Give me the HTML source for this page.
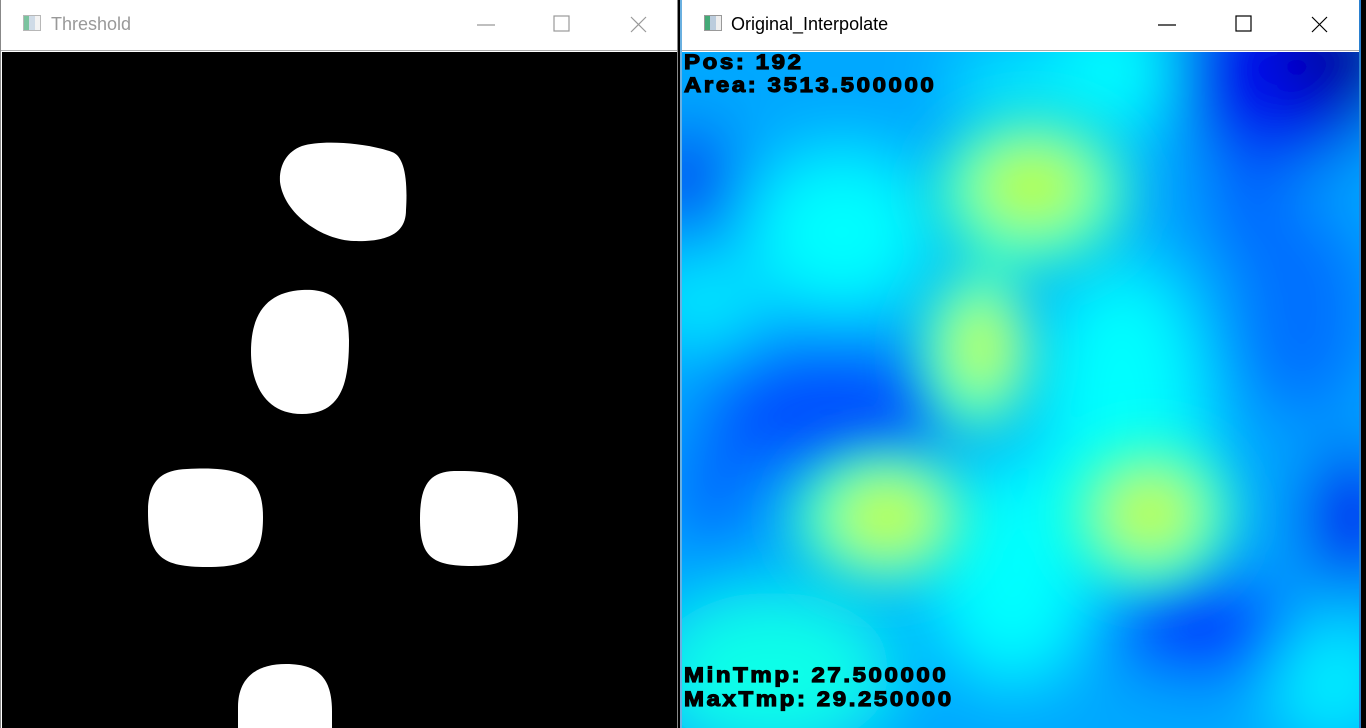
<!DOCTYPE html>
<html><head><meta charset="utf-8"><style>
*{margin:0;padding:0;box-sizing:border-box}
html,body{width:1366px;height:728px;overflow:hidden}
body{background:#000;position:relative;font-family:"Liberation Sans",sans-serif}
.win{position:absolute;top:0;height:728px;background:#fff;overflow:hidden}
.tb{position:absolute;top:0;left:0;right:0;height:51px;background:#fff;border-bottom:1px solid #aaa}
.title{position:absolute;top:14px;left:50px;font-size:18px}
.ico{position:absolute;left:22px;top:15px;width:18px;height:16px;border:1px solid #999;background:linear-gradient(90deg,#4a7 0 30%,#bcd 30% 70%,#eee 70%)}
.btn{position:absolute;top:14px}
.hm{position:absolute;font-weight:bold;font-size:24px;letter-spacing:2.6px;color:#000;-webkit-text-stroke:1.3px #000;line-height:22px;transform:scaleY(0.9);transform-origin:top left}
</style></head><body>
<div class="win" style="left:0;width:678px;border-left:1px solid #888;border-right:1px solid #888">
 <div class="tb">
  <div class="ico" style="opacity:.7"></div>
  <div class="title" style="color:#999">Threshold</div>
  <svg class="btn" style="left:470px" width="190" height="22"><g stroke="#999" stroke-width="1.2" fill="none">
   <line x1="6" y1="11" x2="24" y2="11"/><rect x="83" y="2" width="15" height="15"/><path d="M160 3L175 18M175 3L160 18"/></g></svg>
 </div>
 <div style="position:absolute;left:1px;top:52px;width:675px;height:676px;background:#000">
  <svg width="675" height="676" style="position:absolute;left:0;top:0">
   <path fill="#fff" d="M300 94 C 284 100 277 114 278 130 C 282 162 320 188 352 189 C 388 190 404 180 404 158 C 406 126 402 104 390 100 C 362 90 318 88 300 94 Z"/>
   <path fill="#fff" d="M300 238 C 330 236 347 250 347 288 C 347 330 340 362 300 362 C 262 362 249 330 249 300 C 249 258 268 240 300 238 Z"/>
   <path fill="#fff" d="M185 417 C 240 414 261 424 261 465 C 261 505 248 515 205 515 C 160 515 146 505 146 460 C 146 428 160 418 185 417 Z"/>
   <path fill="#fff" d="M452 419 C 505 418 516 430 516 465 C 516 505 505 514 470 514 C 430 514 418 505 418 467 C 418 432 428 420 452 419 Z"/>
   <path fill="#fff" d="M284 612 C 320 612 330 630 330 660 L330 676 L236 676 L236 655 C 236 628 252 612 284 612 Z"/>
  </svg>
 </div>
</div>
<div class="win" style="left:680px;width:681px;border-left:2px solid #6ab0e0;border-right:2px solid #2a80d0">
 <div class="tb">
  <div class="ico"></div>
  <div class="title" style="color:#000;left:49px">Original_Interpolate</div>
  <svg class="btn" style="left:470px" width="190" height="22"><g stroke="#000" stroke-width="1.2" fill="none">
   <line x1="6" y1="11" x2="24" y2="11"/><rect x="84" y="2" width="15" height="15"/><path d="M160 3L175 18M175 3L160 18"/></g></svg>
 </div>
 <div style="position:absolute;left:0;top:52px;width:677px;height:676px;overflow:hidden;background:#00c0ff">
  <svg width="677" height="676" style="position:absolute;left:0;top:0">
   <defs><filter id="b" filterUnits="userSpaceOnUse" x="-200" y="-200" width="1100" height="1100"><feGaussianBlur stdDeviation="34"/></filter>
   <filter id="s" filterUnits="userSpaceOnUse" x="-200" y="-200" width="1100" height="1100"><feGaussianBlur stdDeviation="26"/></filter></defs>
   <g filter="url(#b)">
    <rect x="-100" y="-100" width="900" height="900" fill="#00a8ff"/>
    <ellipse cx="430" cy="20" rx="70" ry="60" fill="#00ffff"/>
    <ellipse cx="160" cy="180" rx="90" ry="80" fill="#00ffff"/>
    <ellipse cx="20" cy="250" rx="60" ry="40" fill="#00f0ff"/>
    <ellipse cx="440" cy="360" rx="80" ry="150" fill="#00ffff"/>
    <ellipse cx="330" cy="520" rx="80" ry="110" fill="#00ffff"/>
    <ellipse cx="90" cy="620" rx="120" ry="80" fill="#10ffe8"/>
    <ellipse cx="650" cy="630" rx="60" ry="60" fill="#00f0ff"/>
    <ellipse cx="330" cy="30" rx="60" ry="40" fill="#00e8ff"/>
    <ellipse cx="600" cy="20" rx="110" ry="100" fill="#0010f0"/>
    <ellipse cx="665" cy="0" rx="70" ry="60" fill="#0000a0"/>
    <ellipse cx="620" cy="260" rx="70" ry="110" fill="#0070ff"/>
    <ellipse cx="5" cy="125" rx="40" ry="50" fill="#0010f0"/>
    <ellipse cx="150" cy="360" rx="130" ry="70" fill="#0050ff"/>
    <ellipse cx="30" cy="440" rx="40" ry="60" fill="#0060ff"/>
    <ellipse cx="670" cy="465" rx="50" ry="70" fill="#0000f0"/>
    <ellipse cx="520" cy="575" rx="90" ry="50" fill="#0030ff"/>
    <ellipse cx="560" cy="150" rx="40" ry="60" fill="#0060ff"/>
   </g>
   <g filter="url(#s)">
    <ellipse cx="350" cy="140" rx="100" ry="80" fill="#40ffc0"/>
    <ellipse cx="295" cy="300" rx="60" ry="85" fill="#40ffc0"/>
    <ellipse cx="200" cy="465" rx="90" ry="70" fill="#40ffc0"/>
    <ellipse cx="468" cy="462" rx="85" ry="75" fill="#40ffc0"/>
    <ellipse cx="350" cy="135" rx="55" ry="40" fill="#b8ff40"/>
    <ellipse cx="300" cy="295" rx="28" ry="45" fill="#c0ff40"/>
    <ellipse cx="205" cy="465" rx="50" ry="38" fill="#c0ff40"/>
    <ellipse cx="468" cy="462" rx="45" ry="40" fill="#c0ff40"/>
   </g>
  </svg>
  <div class="hm" style="left:2px;top:1px">Pos: 192</div>
  <div class="hm" style="left:2px;top:24px">Area: 3513.500000</div>
  <div class="hm" style="left:2px;top:614px">MinTmp: 27.500000</div>
  <div class="hm" style="left:2px;top:638px">MaxTmp: 29.250000</div>
 </div>
</div>
</body></html>
